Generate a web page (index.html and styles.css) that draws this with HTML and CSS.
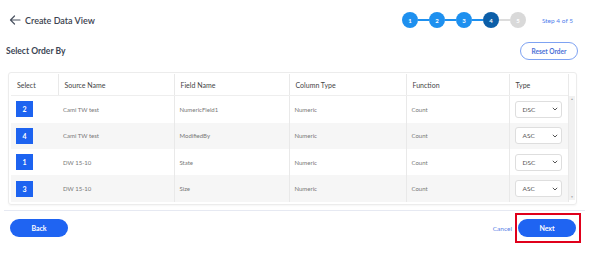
FILE: index.html
```html
<!DOCTYPE html>
<html lang="en">
<head>
    <meta charset="UTF-8">
    <meta name="viewport" content="width=device-width, initial-scale=1.0">
    <title>Create Data View</title>
    <link rel="stylesheet" href="styles.css">
</head>
<body>
    <div class="page">
        <div class="topbar">
            <div class="title">
                <svg class="back-arrow" width="12" height="10" viewBox="0 0 12 10">
                    <path d="M11 5H1.5M5.5 1L1.5 5l4 4" fill="none" stroke="#4a5260" stroke-width="1.2" stroke-linecap="round" stroke-linejoin="round"/>
                </svg>
                <span>Create Data View</span>
            </div>
            <div class="stepper">
                <span class="step done">1</span>
                <span class="line done"></span>
                <span class="step done">2</span>
                <span class="line done"></span>
                <span class="step done">3</span>
                <span class="line done"></span>
                <span class="step current">4</span>
                <span class="line"></span>
                <span class="step">5</span>
                <span class="step-label">Step 4 of 5</span>
            </div>
        </div>

        <div class="subbar">
            <h2>Select Order By</h2>
            <button class="btn-outline">Reset Order</button>
        </div>

        <div class="table-wrap">
            <table class="order-table">
                <colgroup>
                    <col style="width:47px">
                    <col style="width:116px">
                    <col style="width:115px">
                    <col style="width:117px">
                    <col style="width:103px">
                    <col style="width:59px">
                </colgroup>
                <thead>
                    <tr>
                        <th>Select</th>
                        <th class="divided">Source Name</th>
                        <th class="divided">Field Name</th>
                        <th class="divided">Column Type</th>
                        <th class="divided">Function</th>
                        <th class="divided">Type</th>
                    </tr>
                </thead>
                <tbody>
                    <tr>
                        <td><span class="num">2</span></td>
                        <td>Cami TW test</td>
                        <td class="divided">NumericField1</td>
                        <td class="divided">Numeric</td>
                        <td class="divided">Count</td>
                        <td class="divided"><div class="dropdown">DSC<svg width="6" height="4" viewBox="0 0 6 4"><path d="M0.8 0.8L3 3l2.2-2.2" fill="none" stroke="#555" stroke-width="1"/></svg></div></td>
                    </tr>
                    <tr class="alt">
                        <td><span class="num">4</span></td>
                        <td>Cami TW test</td>
                        <td class="divided">ModifiedBy</td>
                        <td class="divided">Numeric</td>
                        <td class="divided">Count</td>
                        <td class="divided"><div class="dropdown">ASC<svg width="6" height="4" viewBox="0 0 6 4"><path d="M0.8 0.8L3 3l2.2-2.2" fill="none" stroke="#555" stroke-width="1"/></svg></div></td>
                    </tr>
                    <tr>
                        <td><span class="num">1</span></td>
                        <td>DW 15-10</td>
                        <td class="divided">State</td>
                        <td class="divided">Numeric</td>
                        <td class="divided">Count</td>
                        <td class="divided"><div class="dropdown">DSC<svg width="6" height="4" viewBox="0 0 6 4"><path d="M0.8 0.8L3 3l2.2-2.2" fill="none" stroke="#555" stroke-width="1"/></svg></div></td>
                    </tr>
                    <tr class="alt">
                        <td><span class="num">3</span></td>
                        <td>DW 15-10</td>
                        <td class="divided">Size</td>
                        <td class="divided">Numeric</td>
                        <td class="divided">Count</td>
                        <td class="divided"><div class="dropdown">ASC<svg width="6" height="4" viewBox="0 0 6 4"><path d="M0.8 0.8L3 3l2.2-2.2" fill="none" stroke="#555" stroke-width="1"/></svg></div></td>
                    </tr>
                </tbody>
            </table>
            <div class="scrollbar">
                <div class="track">
                    <span class="caret">&#9650;</span>
                    <span class="caret">&#9660;</span>
                </div>
            </div>
        </div>

        <div class="footer">
            <button class="btn-primary">Back</button>
            <div class="actions">
                <a class="cancel" href="#">Cancel</a>
                <span class="highlight"><button class="btn-primary">Next</button></span>
            </div>
        </div>
    </div>
</body>
</html>
```

FILE: styles.css
```css
body {
    margin: 0;
    background-color: white;
    font-family: "Source Sans Pro", Lato, "Liberation Sans", sans-serif;
    color: #444;
}
.page {
    width: 589px;
    height: 253px;
    overflow: hidden;
}
.topbar {
    display: flex;
    justify-content: space-between;
    align-items: center;
    height: 24px;
    padding: 8px 15px 0 9px;
}
.title {
    display: flex;
    align-items: center;
    gap: 4px;
    font-size: 9px;
    font-weight: 600;
    color: #3d4451;
}
.stepper {
    display: flex;
    align-items: center;
    margin-right: 1px;
}
.step {
    width: 16px;
    height: 16px;
    border-radius: 50%;
    background-color: #d9d9d9;
    color: white;
    font-size: 6px;
    font-weight: 700;
    display: flex;
    align-items: center;
    justify-content: center;
}
.step.done {
    background-color: #1e90ef;
}
.step.current {
    background-color: #0c5ea8;
}
.line {
    width: 11px;
    height: 2px;
    background-color: #dcdcdc;
}
.line.done {
    background-color: #1e90ef;
}
.step-label {
    margin-left: 16px;
    font-size: 6.5px;
    color: #4f80ec;
}
.subbar {
    display: flex;
    justify-content: space-between;
    align-items: center;
    padding: 9px 11px 0 6px;
    height: 20px;
}
.subbar h2 {
    margin: 0;
    font-size: 8.5px;
    font-weight: 700;
    color: #3c4654;
}
.btn-outline {
    width: 58px;
    height: 18px;
    border: 1px solid #7ea2f2;
    border-radius: 9px;
    background-color: white;
    color: #4a6fd6;
    font-family: inherit;
    font-size: 6.5px;
    font-weight: 700;
    padding: 0;
}
.table-wrap {
    display: flex;
    margin: 11px 12px 0 8px;
    padding: 1px 1px 2px 2px;
    height: 128px;
    border: 1px solid #ececec;
    border-radius: 3px;
    box-shadow: 0 1px 2px rgba(0,0,0,0.04);
}
.order-table {
    border-collapse: collapse;
    table-layout: fixed;
    width: 557px;
}
.order-table th {
    height: 21px;
    text-align: left;
    font-size: 7px;
    font-weight: 400;
    color: #444;
    padding: 0 5px 0 6px;
    border-bottom: 1px solid #eeeeee;
}
.order-table td {
    height: 26px;
    font-size: 6px;
    color: #777;
    padding: 0 5px;
}
.order-table .divided {
    border-left: 1px solid #e9e9e9;
}
.order-table tr.alt td {
    background-color: #f6f6f6;
}
.num {
    display: flex;
    align-items: center;
    justify-content: center;
    width: 17px;
    height: 16px;
    background-color: #1d63f0;
    color: white;
    font-size: 7px;
    font-weight: 700;
}
.dropdown {
    display: flex;
    align-items: center;
    justify-content: space-between;
    width: 47px;
    height: 17px;
    box-sizing: border-box;
    padding: 0 3px 0 7px;
    border: 1px solid #dedede;
    border-radius: 3px;
    background-color: white;
    color: #555;
    font-size: 6.5px;
}
.scrollbar {
    width: 9px;
    padding-top: 22px;
    border-left: 1px solid #e9e9e9;
}
.track {
    display: flex;
    flex-direction: column;
    justify-content: space-between;
    align-items: center;
    height: 104px;
    background-color: #f1f1f1;
}
.caret {
    font-size: 3px;
    color: #a0a0a0;
    line-height: 6px;
}
.footer {
    display: flex;
    justify-content: space-between;
    align-items: center;
    margin: 5px 4px 0 4px;
    padding: 2px 4px 0 6px;
    border-top: 1px solid #e6e9f2;
    height: 30px;
}
.actions {
    display: flex;
    align-items: center;
    gap: 3px;
}
.cancel {
    font-size: 6.5px;
    color: #5b7fe6;
    text-decoration: none;
}
.highlight {
    display: flex;
    padding: 4px 3px 4px 1px;
    border: 2px solid #e0001b;
}
.btn-primary {
    width: 58px;
    height: 18px;
    border: none;
    border-radius: 9px;
    background-color: #1f64f2;
    color: white;
    font-family: inherit;
    font-size: 7px;
    font-weight: 700;
    padding: 0;
}
```
